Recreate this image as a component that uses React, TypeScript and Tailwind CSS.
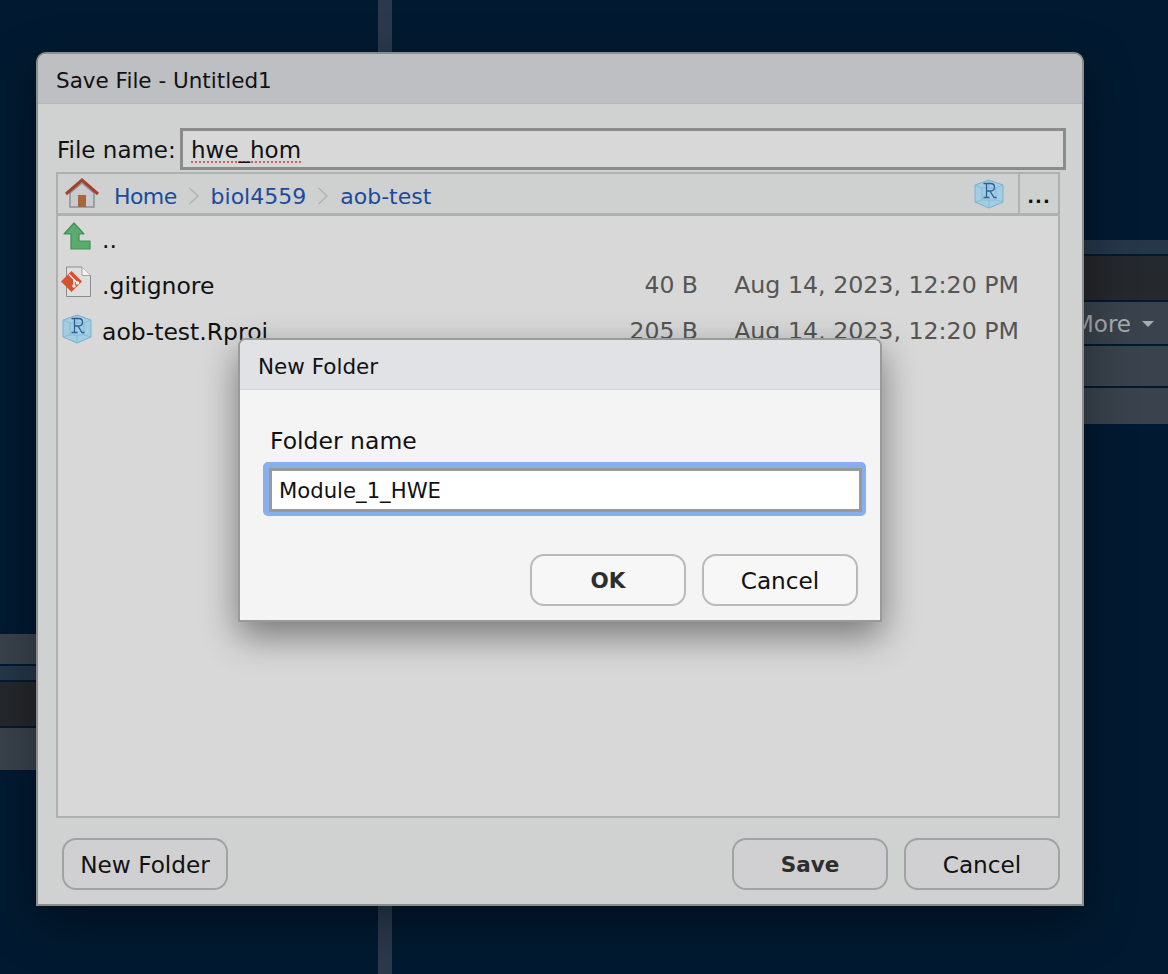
const font = "font-['DejaVu_Sans','Liberation_Sans',sans-serif]";

function Home() {
  return (
    <svg width="36" height="32" viewBox="0 0 36 32" className="shrink-0">
      <path d="M6 15 L18 5 L30 15 V29 H6 Z" fill="#c9cbd0" stroke="#8d9094" strokeWidth="1.5" />
      <rect x="14" y="17" width="8" height="12" fill="#a5683a" />
      <path d="M2 16 L18 2 L34 16" fill="none" stroke="#a5402c" strokeWidth="3" strokeLinejoin="miter" />
    </svg>
  );
}

function Up() {
  return (
    <svg width="28" height="28" viewBox="0 0 28 28" className="shrink-0 ml-[1px] -translate-y-[4px]">
      <path d="M11 1 L21 12 H16 V19 H27 V27 H8 V12 H1 Z" fill="#5cab6e" stroke="#3f8f58" strokeWidth="1.2" strokeLinejoin="round" />
    </svg>
  );
}

function GitFile() {
  return (
    <svg width="32" height="32" viewBox="0 0 32 32" className="shrink-0 -translate-y-[4px] -translate-x-[1px]">
      <path d="M5.5 1 H21 L29.5 9.500 V30.500 H5.500 Z" fill="#dedede" stroke="#8b8b8b" />
      <path d="M21 1 V9.500 H29.500" fill="#f2f2f2" stroke="#a5a5a5" />
      <path d="M10.500 5 L21 15.500 L10.500 26 L0 15.500 Z" fill="#d4532f" />
      <path d="M8 8.500 L13 13.500 V19.500 M13 13.500 L16.500 17" stroke="#eeeeee" strokeWidth="1.500" fill="none" />
      <circle cx="13" cy="20" r="1.800" fill="#eeeeee" />
      <circle cx="16.500" cy="17" r="1.800" fill="#eeeeee" />
    </svg>
  );
}

function RCube({ shift }: { shift?: boolean }) {
  return (
    <svg width="30" height="30" viewBox="0 0 30 30" className={`shrink-0 ${shift ? "-translate-y-[3px]" : ""}`}>
      <path d="M15 1 L29 6 V23 L15 29 L1 23 V6 Z" fill="#a3cde2" stroke="#78b2d0" strokeWidth="1" />
      <path d="M1 6 L8 9 H22 L29 6 M8 9 V21 L1 23 M22 9 V21 L29 23 M8 21 H22 M15 29 V21 M15 1 V9" fill="none" stroke="#7fb7d3" strokeWidth="0.800" />
      <path d="M9.500 4.500 H16.500 Q20.500 4.500 20.500 8.250 Q20.500 12 16.500 12 H12.500 M12.500 4.500 V18.500 M9.500 18.500 H15.500 M16 12 L20 18.500 H22.500" fill="none" stroke="#2f5d96" strokeWidth="1.300" />
    </svg>
  );
}

function Chevron() {
  return (
    <svg width="12" height="20" viewBox="0 0 12 20" className="shrink-0 translate-y-[2px]">
      <path d="M1.500 2 L10 10 L1.500 18" fill="none" stroke="#b2b3b3" strokeWidth="1.500" />
    </svg>
  );
}

function Btn({ label, bold, w, light }: { label: string; bold?: boolean; w: string; light?: boolean }) {
  return (
    <button
      className={`${w} h-[52px] pt-[3px] rounded-[14px] border-2 flex items-center justify-center ${bold ? "text-[21.500px] font-bold text-[#2e2e2e]" : "text-[23.200px] text-[#111]"} ${light ? "border-[#bababa] bg-[#f7f7f8]" : "border-[#a2a2a2] bg-[#d0d0d2]"}`}
    >
      {label}
    </button>
  );
}

function FileRow({ icon, name, size, date }: { icon: React.ReactNode; name: string; size?: string; date?: string }) {
  return (
    <div className="h-[46px] flex items-center text-[23.500px] text-[#111] pr-[39px]">
      <div className="w-[44px] pl-[4px] flex items-center shrink-0">{icon}</div>
      <span className="flex-1 translate-y-[1px]">{name}</span>
      {size && <span className="w-[120px] text-right text-[#555]">{size}</span>}
      {date && <span className="w-[321px] text-right text-[#555] text-[23.700px]">{date}</span>}
    </div>
  );
}

export default function App() {
  return (
    <div className={`relative w-[1168px] h-[974px] overflow-hidden bg-[#021a31] ${font}`}>
      <div className="flex h-full">
        <div className="w-[378px] pt-[634px] flex flex-col gap-[2px]">
          <div className="h-[30px] bg-[#3a434d]" />
          <div className="h-[14px] bg-[#263749]" />
          <div className="h-[44px] bg-[#25282c]" />
          <div className="h-[42px] bg-[#3a434d]" />
        </div>
        <div className="w-[14px] bg-[#2a3a4c]" />
        <div className="flex-1 pt-[240px] flex flex-col gap-[2px]">
          <div className="h-[14px] bg-[#263749]" />
          <div className="h-[44px] bg-[#25282c]" />
          <div className="h-[42px] bg-[#3a434d] flex items-center justify-end gap-[11px] pr-[14px] pt-[2px] text-[23px] text-[#a9adb2]">
            <span>More</span>
            <span className="w-0 h-0 border-x-[6px] border-x-transparent border-t-[6px] border-t-[#a9adb2]" />
          </div>
          <div className="h-[40px] bg-[#3a434d]" />
          <div className="h-[36px] bg-[#3a434d]" />
        </div>
      </div>

      <div className="absolute left-[36px] top-[52px] w-[1048px] h-[854px] flex flex-col bg-[#d0d2d1] border-2 border-[#8c8d8d] rounded-t-[10px] shadow-[0_16px_50px_rgba(0,0,0,0.4)]">
        <div className="h-[50px] shrink-0 pt-[5px] bg-[#bdbfc3] rounded-t-[8px] border-b border-[#b5b7ba] flex items-center pl-[18px] text-[21.500px] text-[#111]">
          Save File - Untitled1
        </div>
        <div className="flex-1 flex flex-col pl-[18px] pr-[16px]">
          <div className="flex items-center mt-[24px] h-[42px] gap-[5px] text-[23px] text-[#111]">
            <span className="w-[119px] pl-[1px] shrink-0 whitespace-nowrap translate-y-[1px]">File name:</span>
            <div className="flex-1 h-full border-[3px] border-[#8b8b8b] bg-[#d8d8d8] flex items-center pl-[8px] pt-[3px]">
              <span className="underline decoration-dotted decoration-[#c9655c] decoration-2 underline-offset-[3px]">hwe_hom</span>
            </div>
          </div>
          <div className="w-[1004px] mt-[2px] h-[646px] border-2 border-[#aeb0b0] flex flex-col bg-[#d8d8d8]">
            <div className="h-[42px] shrink-0 bg-[#cfd1d0] border-b-[3px] border-[#b0b2b2] flex items-center text-[22px] text-[#1c4a9c]">
              <div className="pl-[6px] pr-[14px] flex items-center"><Home /></div>
              <span className="pt-[5px] tracking-[-0.6px]">Home</span>
              <div className="mx-[11px] flex"><Chevron /></div>
              <span className="pt-[5px]">biol4559</span>
              <div className="mx-[11px] flex"><Chevron /></div>
              <span className="pt-[5px]">aob-test</span>
              <div className="ml-auto pr-[14px] flex items-center"><RCube /></div>
              <div className="w-[40px] h-full border-l-2 border-[#b0b2b2] flex items-center justify-center pt-[5px] text-[#111] text-[18px] font-bold tracking-[1px]">...</div>
            </div>
            <div className="flex flex-col pt-[1px]">
              <FileRow icon={<Up />} name=".." />
              <FileRow icon={<GitFile />} name=".gitignore" size="40 B" date="Aug 14, 2023, 12:20 PM" />
              <FileRow icon={<RCube shift />} name="aob-test.Rproj" size="205 B" date="Aug 14, 2023, 12:20 PM" />
            </div>
          </div>
          <div className="flex mt-[20px] pl-[6px] pr-[6px] gap-[16px]">
            <Btn label="New Folder" w="w-[166px]" />
            <div className="ml-auto" />
            <Btn label="Save" bold w="w-[156px]" />
            <Btn label="Cancel" w="w-[156px]" />
          </div>
        </div>

        <div className="absolute left-[200px] top-[284px] w-[644px] h-[284px] flex flex-col bg-[#f4f4f4] border-2 border-[#999a9a] rounded-t-[8px] shadow-[0_14px_36px_rgba(0,0,0,0.45)]">
          <div className="h-[50px] shrink-0 pt-[5px] bg-[#e0e2e6] border-b border-[#d2d3d6] rounded-t-[6px] flex items-center pl-[18px] text-[21.500px] text-[#111]">
            New Folder
          </div>
          <div className="flex-1 flex flex-col pl-[24px] pr-[14px]">
            <div className="mt-[36px] pl-[6px] text-[23.500px] leading-[30px] text-[#111]">Folder name</div>
            <div className="-ml-[1px] mt-[6px] h-[54px] rounded-[5px] bg-[#88aeec] p-[6px] pr-[4px] pb-[4px]">
              <div className="h-full border-[3px] border-[#999] bg-white flex items-center pl-[7px] pt-[2px] text-[21.200px] text-[#111]">Module_1_HWE</div>
            </div>
            <div className="flex justify-end gap-[16px] mt-[38px] pr-[8px]">
              <Btn label="OK" bold w="w-[156px]" light />
              <Btn label="Cancel" w="w-[156px]" light />
            </div>
          </div>
        </div>
      </div>
    </div>
  );
}
